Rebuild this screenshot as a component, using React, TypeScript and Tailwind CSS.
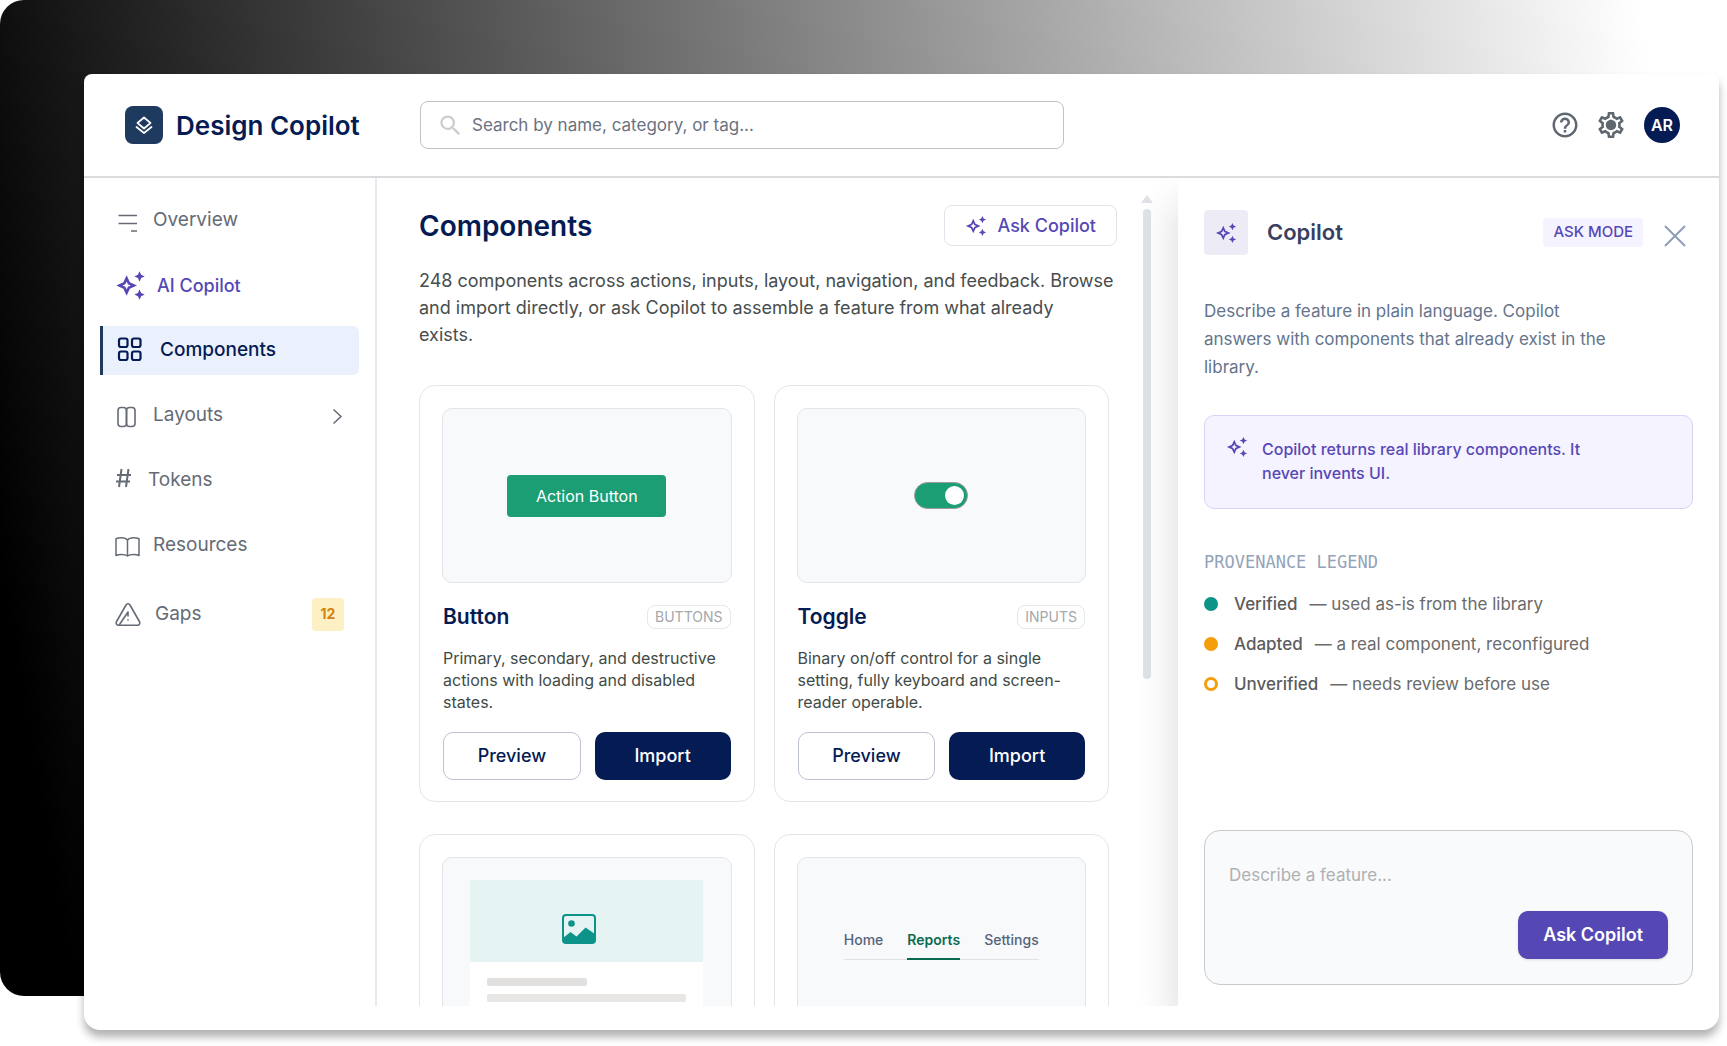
import type { ReactNode } from "react";
import { MdHelpOutline, MdOutlineAutoAwesome, MdOutlineSettings, MdSearch } from "react-icons/md";

type NavItem = {
  label: string;
  icon: ReactNode;
  active?: boolean;
  accent?: boolean;
  chevron?: boolean;
  badge?: string;
};

type ComponentInfo = {
  id: string;
  preview: ReactNode;
  details?: { name: string; tag: string; description: string };
};

const OverviewIcon = () => (
  <svg width="27" height="28" fill="none" stroke="currentColor" strokeWidth="1.5">
    <path d="M3.5 8.500H22M3.5 16.500H22M16 24h6" />
  </svg>
);

const GridIcon = () => (
  <svg width="34" height="28" fill="none" stroke="currentColor" strokeWidth="2.2">
    <rect x="4" y="1.5" width="8.5" height="8.5" rx="2" />
    <rect x="17" y="1.5" width="8.5" height="8.5" rx="2" />
    <rect x="4" y="14.5" width="8.5" height="8.5" rx="2" />
    <rect x="17" y="14.5" width="8.5" height="8.5" rx="2" />
  </svg>
);

const LayoutsIcon = () => (
  <svg width="27" height="28" fill="none" stroke="currentColor" strokeWidth="1.6">
    <rect x="3" y="5.5" width="8.5" height="19" rx="3" />
    <rect x="11.5" y="5.5" width="8.5" height="19" rx="3" />
  </svg>
);

const HashIcon = () => (
  <svg width="22" height="28" fill="none" stroke="currentColor" strokeWidth="2">
    <path d="M2 8h14M1 14.5h14M6.5 2 4 20M13.5 2 11 20" />
  </svg>
);

const BookIcon = () => (
  <svg width="27" height="28" fill="none" stroke="currentColor" strokeWidth="1.5" strokeLinejoin="round">
    <path d="M12.5 8C11 6 8.5 5.8 6.5 5.800c-2 0-4 .2-5.5.9V23.500c1.500-.7 3.500-.9 5.500-.9s4.500.2 6 1.400c1.500-1.200 4-1.400 6-1.400s4 .2 5.500.9V6.700c-1.500-.7-3.500-.9-5.500-.9-2 0-4.500.2-6 2.200zM12.500 8v16" />
  </svg>
);

const GapsIcon = () => (
  <svg
    width="29"
    height="28"
    fill="none"
    stroke="currentColor"
    strokeWidth="1.6"
    strokeLinejoin="round"
    strokeLinecap="round"
  >
    <path d="M11 5 1.600 21.500c-1 1.800.1 3.700 2 3.700h18.800c1.900 0 3-1.900 2-3.700L15 5c-1-1.700-3-1.700-4 0z" />
    <path d="M4.500 24.500 13 12v4M13 19.800v.2" />
  </svg>
);

const LogoIcon = () => (
  <svg
    width="18"
    height="18"
    fill="none"
    stroke="currentColor"
    strokeWidth="1.7"
    strokeLinejoin="round"
    strokeLinecap="round"
  >
    <path d="M9 1.500 15.500 7 9 12.500 2.500 7z" />
    <path d="m1.500 11 7.500 6 7.500-6" />
  </svg>
);

const GearIcon = () => (
  <svg width="26" height="26" viewBox="2 2 20 20" fill="currentColor">
    <MdOutlineSettings size={24} />
    <circle cx="12" cy="12" r="3" />
  </svg>
);

const navItems: NavItem[] = [
  { label: "Overview", icon: <OverviewIcon /> },
  { label: "AI Copilot", icon: <MdOutlineAutoAwesome size={31} />, accent: true },
  { label: "Components", icon: <GridIcon />, active: true },
  { label: "Layouts", icon: <LayoutsIcon />, chevron: true },
  { label: "Tokens", icon: <HashIcon /> },
  { label: "Resources", icon: <BookIcon /> },
  { label: "Gaps", icon: <GapsIcon />, badge: "12" },
];

const ActionPreview = () => (
  <button className="h-[42px] w-[159px] rounded bg-[#1b9e74] text-base text-white">Action Button</button>
);

const TogglePreview = () => (
  <label className="flex h-[27px] w-[54px] items-center justify-end rounded-full border border-[#a09a9d] bg-[#1b9e74] pr-[3px]">
    <input type="checkbox" role="switch" aria-label="Toggle" defaultChecked className="sr-only" />
    <span className="size-[19px] rounded-full bg-white" />
  </label>
);

const CardPreview = () => (
  <div className="mt-[22px] flex w-[233px] flex-col self-start bg-white">
    <div className="flex h-[82px] items-center justify-center bg-[#e5f3f3] pt-4 pr-4">
      <svg width="34" height="30" className="text-[#0d9488]">
        <rect x="1" y="1" width="32" height="28" rx="3" fill="none" stroke="currentColor" strokeWidth="2" />
        <circle cx="9.5" cy="9.5" r="3.3" fill="currentColor" />
        <path
          d="M1 24 8.500 18l6 4.500 9-9L33 20v6a3 3 0 0 1-3 3H4a3 3 0 0 1-3-3z"
          fill="currentColor"
        />
      </svg>
    </div>
    <div className="flex flex-col gap-2 px-[17px] py-4">
      <div className="h-2 w-1/2 rounded-xs bg-[#e1e0df]" />
      <div className="h-2 rounded-xs bg-[#e8e7e5]" />
      <div className="h-2 rounded-xs bg-[#e8e7e5]" />
    </div>
  </div>
);

const TabsPreview = () => (
  <div className="flex gap-6 border-b border-[#dfe1e4] text-sm font-medium text-[#54637a]">
    <a href="#home" className="pb-2">
      Home
    </a>
    <a href="#reports" className="-mb-px border-b-2 border-[#0b6b50] pb-2 font-semibold text-[#0b6b50]">
      Reports
    </a>
    <a href="#settings" className="pb-2">
      Settings
    </a>
  </div>
);

const components: ComponentInfo[] = [
  {
    id: "button",
    preview: <ActionPreview />,
    details: {
      name: "Button",
      tag: "BUTTONS",
      description: "Primary, secondary, and destructive actions with loading and disabled states.",
    },
  },
  {
    id: "toggle",
    preview: <TogglePreview />,
    details: {
      name: "Toggle",
      tag: "INPUTS",
      description: "Binary on/off control for a single setting, fully keyboard and screen-reader operable.",
    },
  },
  { id: "card", preview: <CardPreview /> },
  { id: "tabs", preview: <TabsPreview /> },
];

const legend = [
  { name: "Verified", text: "— used as-is from the library", dot: "bg-[#0d9488]" },
  { name: "Adapted", text: "— a real component, reconfigured", dot: "bg-[#f59e0b]" },
  { name: "Unverified", text: "— needs review before use", dot: "border-3 border-[#f59e0b]" },
];

const Header = () => (
  <header className="flex h-[104px] shrink-0 items-center border-b-2 border-[#dadbdc] pr-[39px] pl-[41px]">
    <div className="flex w-[295px] shrink-0 items-center gap-[13px]">
      <div className="flex size-[38px] items-center justify-center rounded-lg bg-[#1f3a5f] text-white">
        <LogoIcon />
      </div>
      <span className="text-[26px] font-semibold text-[#051b54]">Design Copilot</span>
    </div>
    <label className="flex h-12 w-[644px] items-center gap-2 rounded-lg border border-[#c1c2c4] px-4">
      <MdSearch size={27} className="text-[#c9cdcd]" />
      <input
        type="search"
        aria-label="Search components"
        placeholder="Search by name, category, or tag..."
        className="min-w-0 flex-1 pt-0.5 text-[17px] outline-none placeholder:text-[#6b7280]"
      />
    </label>
    <div className="ml-auto flex items-center gap-[18px] text-[#5f6770]">
      <button aria-label="Help">
        <MdHelpOutline size={30} />
      </button>
      <button aria-label="Settings">
        <GearIcon />
      </button>
      <button className="ml-0.5 size-9 rounded-full bg-[#051b54] text-base font-semibold text-white">AR</button>
    </div>
  </header>
);

const Sidebar = () => (
  <nav className="flex w-[293px] shrink-0 flex-col gap-4 border-r-2 border-[#e8eaf1] px-4 pt-[18px]">
    {navItems.map(({ label, icon, active, accent, chevron, badge }) => (
      <a
        key={label}
        href={`#${label}`}
        className={`flex items-center gap-[11px] border-l-3 pr-[15px] pl-3 ${badge ? "h-14" : "h-[49px]"} ${
          active
            ? "rounded-r-md border-[#1f3a5f] bg-[#eaf1fd] text-[19px] font-medium text-[#051b54]"
            : accent
              ? "border-transparent text-lg font-medium text-[#5548b5]"
              : "border-transparent text-[19px] text-[#656b76]"
        }`}
      >
        {icon}
        {label}
        {chevron && (
          <svg width="12" height="16" fill="none" stroke="currentColor" strokeWidth="1.5" className="ml-auto">
            <path d="m1.500 1.500 7.500 7-7.500 7" />
          </svg>
        )}
        {badge && (
          <span className="ml-auto flex h-[33px] w-8 items-center justify-center rounded bg-[#fdf0c4] text-sm font-bold text-[#d6820f]">
            {badge}
          </span>
        )}
      </a>
    ))}
  </nav>
);

const ComponentCard = ({ preview, details }: ComponentInfo) => (
  <article className="rounded-2xl border border-[#e3e5eb] p-[22px] pb-[21px]">
    <div className="flex h-[175px] items-center justify-center overflow-hidden rounded-[10px] border border-[#e2e5ea] bg-[#f8f9fb]">
      {preview}
    </div>
    {details && (
      <div className="px-px">
        <div className="mt-[22px] flex h-6 items-center justify-between">
          <h2 className="text-[21px] font-semibold text-[#051b54]">{details.name}</h2>
          <span className="flex h-6 items-center rounded-lg border border-[#e6e7ea] px-[7px] text-sm text-[#a4a7ac]">
            {details.tag}
          </span>
        </div>
        <p className="mt-[18px] text-base leading-[22px] text-[#414b46]">{details.description}</p>
        <div className="mt-[19px] flex gap-[14px] text-lg font-medium">
          <button className="h-12 flex-1 rounded-[10px] border border-[#bcc2d2] text-[#051b54]">Preview</button>
          <button className="h-12 flex-1 rounded-[10px] bg-[#051b54] text-white">Import</button>
        </div>
      </div>
    )}
  </article>
);

const CopilotPanel = () => (
  <aside className="flex w-[541px] shrink-0 flex-col bg-white px-[26px] pt-8 pb-[21px] shadow-[-6px_24px_36px_rgba(0,0,0,0.12)]">
    <div className="flex items-center">
      <div className="flex h-[45px] w-11 items-center justify-center rounded bg-[#edecf6] text-[#5548b5]">
        <MdOutlineAutoAwesome size={22} />
      </div>
      <h2 className="ml-[19px] text-[22px] font-semibold text-[#3a3f60]">Copilot</h2>
      <span className="ml-auto flex h-[29px] items-center rounded bg-[#f5f3ff] px-2.5 text-[15px] font-medium text-[#5548b5]">
        ASK MODE
      </span>
      <button aria-label="Close" className="mr-[7px] ml-[21px] pt-1.5 text-[#8d9db5]">
        <svg width="22" height="22" fill="none" stroke="currentColor" strokeWidth="2">
          <path d="m1 1 20 20M21 1 1 21" />
        </svg>
      </button>
    </div>
    <p className="mt-[42px] max-w-[420px] text-[17px] leading-7 text-[#64748b]">
      Describe a feature in plain language. Copilot answers with components that already exist in the library.
    </p>
    <div className="mt-[34px] flex gap-3.5 rounded-[10px] border border-[#d8d2f3] bg-[#f5f3ff] px-[21px] pt-5 pb-[23px] text-[#5548b5]">
      <MdOutlineAutoAwesome size={22} className="shrink-0" />
      <p className="max-w-[330px] pt-px text-base leading-6 font-medium">
        Copilot returns real library components. It never invents UI.
      </p>
    </div>
    <h3 className="mt-[41px] font-['DejaVu_Sans_Mono',monospace] text-[17px] leading-6 text-[#94a3b8]">
      PROVENANCE LEGEND
    </h3>
    <ul className="mt-2.5 text-[17px] leading-10 text-[#6b6b6b]">
      {legend.map(({ name, text, dot }) => (
        <li key={name} className="flex items-center">
          <span className={`size-[14px] rounded-full ${dot}`} />
          <span className="ml-4 font-medium text-[#5c5c5c]">{name}</span>
          <span className="ml-3">{text}</span>
        </li>
      ))}
    </ul>
    <form className="mt-auto flex flex-col rounded-2xl border border-[#c8cacb] bg-[#f9fafc] px-6 pt-8 pb-[25px]">
      <textarea
        aria-label="Describe a feature"
        placeholder="Describe a feature..."
        rows={1}
        className="h-12 resize-none text-[17px] leading-6 outline-none placeholder:text-[#aeb0b3]"
      />
      <button
        type="button"
        className="h-12 self-end rounded-[10px] bg-[#5548b5] px-[25px] text-lg font-semibold text-white shadow-sm"
      >
        Ask Copilot
      </button>
    </form>
  </aside>
);

const App = () => (
  <div className="grid h-screen grid-cols-1 grid-rows-1 bg-white font-['Inter',sans-serif]">
    <div className="col-start-1 row-start-1 mr-3 mb-[50px] rounded-3xl bg-[linear-gradient(80deg,#000_4%,#fff_96%)]" />
    <div className="col-start-1 row-start-1 mt-[74px] mr-2 mb-4 ml-[84px] flex min-h-0 flex-col overflow-hidden rounded-t-lg rounded-b-2xl bg-white pb-6 shadow-[0_7px_9px_rgba(0,0,0,0.3)]">
      <Header />
      <div className="flex min-h-0 flex-1 overflow-hidden">
        <Sidebar />
        <main className="flex min-w-0 flex-1 gap-6 overflow-hidden pr-[25px] pl-[42px]">
          <div className="min-w-0 flex-1 pt-[27px]">
            <div className="flex items-center justify-between">
              <h1 className="text-[28px] leading-10 font-semibold text-[#051b54]">Components</h1>
              <button className="flex h-[41px] items-center gap-2.5 rounded-lg border border-[#e0e3ea] px-5 text-lg font-medium text-[#5548b5]">
                <MdOutlineAutoAwesome size={22} />
                Ask Copilot
              </button>
            </div>
            <p className="mt-[21px] text-lg leading-[27px] text-[#484d4d]">
              248 components across actions, inputs, layout, navigation, and feedback. Browse and import directly, or ask
              Copilot to assemble a feature from what already
              <br />
              exists.
            </p>
            <div className="mt-[37px] grid grid-cols-2 gap-x-[19px] gap-y-8 pr-2">
              {components.map((item) => (
                <ComponentCard key={item.id} {...item} />
              ))}
            </div>
          </div>
          <div className="flex w-3 flex-col items-center gap-1.5 pt-[17px]">
            <svg width="12" height="8" className="text-[#dfe3e8]">
              <path d="M6 0 12 8H0z" fill="currentColor" />
            </svg>
            <div className="h-[58%] w-2 rounded-full bg-[#dfe3e8]" />
          </div>
        </main>
        <CopilotPanel />
      </div>
    </div>
  </div>
);

export default App;
